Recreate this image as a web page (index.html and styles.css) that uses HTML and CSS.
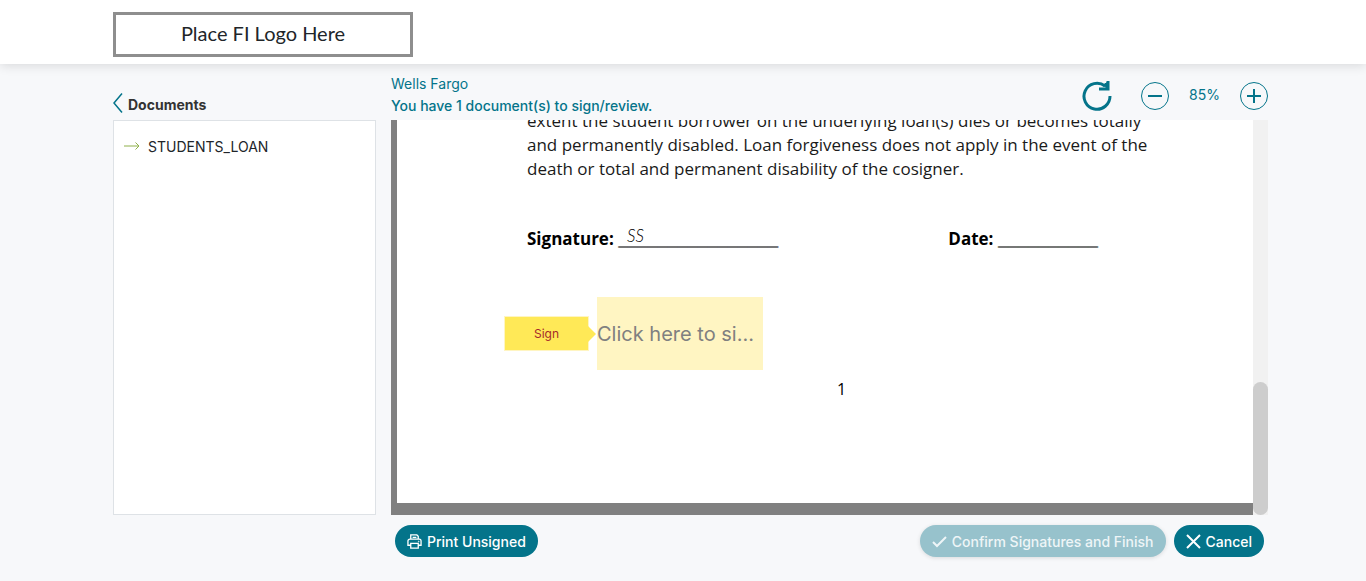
FILE: index.html
```html
<!DOCTYPE html>
<html lang="en">
<head>
    <meta charset="UTF-8">
    <meta name="viewport" content="width=device-width, initial-scale=1.0">
    <title>Sign Documents</title>
    <link rel="stylesheet" href="styles.css">
</head>
<body>
    <header class="header">
        <div class="container">
            <div class="logo">Place FI Logo Here</div>
        </div>
    </header>

    <main class="container main">
        <aside class="sidebar">
            <div class="sidebar-top">
                <button type="button" class="back-btn" aria-label="Back">
                    <svg width="10" height="20" viewBox="0 0 10 20"><path d="M9 .5L1 10l8 9.500" /></svg>
                </button>
                <h2>Documents</h2>
            </div>
            <div class="doc-list">
                <a href="#" class="doc-link">
                    <svg width="16" height="8" viewBox="0 0 16 8"><path d="M0 4h15M11.500 .5L15 4l-3.500 3.500" /></svg>
                    STUDENTS_LOAN
                </a>
            </div>
        </aside>

        <section class="content">
            <div class="toolbar">
                <div class="status">
                    <p>Wells Fargo</p>
                    <p class="status-msg">You have 1 document(s) to sign/review.</p>
                </div>
                <div class="zoom-tools">
                    <button type="button" class="icon-btn rotate-btn" aria-label="Rotate">
                        <svg width="30" height="30" viewBox="0 0 30 30"><path d="M28 15A13 13 0 1 1 23 5" stroke-width="3" /><path d="M26 0v8h-9" stroke-width="3" /><path d="M21 4l5-3v7z" fill="currentColor" /></svg>
                    </button>
                    <button type="button" class="icon-btn" aria-label="Zoom out">
                        <svg width="28" height="28" viewBox="0 0 28 28"><circle cx="14" cy="14" r="13.500" /><path d="M7 14h14" stroke-width="2" /></svg>
                    </button>
                    <span class="zoom-value">85%</span>
                    <button type="button" class="icon-btn" aria-label="Zoom in">
                        <svg width="28" height="28" viewBox="0 0 28 28"><circle cx="14" cy="14" r="13.500" /><path d="M7 14h14M14 7v14" stroke-width="2" /></svg>
                    </button>
                </div>
            </div>

            <div class="viewer">
                <div class="page">
                    <p class="page-text">extent the student borrower on the underlying loan(s) dies or becomes totally<br>and permanently disabled. Loan forgiveness does not apply in the event of the<br>death or total and permanent disability of the cosigner.</p>
                    <div class="sign-row">
                        <div class="signature">Signature: <span class="line">________________</span><span class="initials">SS</span></div>
                        <div>Date: <span class="line">__________</span></div>
                    </div>
                    <div class="sign-here">
                        <span class="sign-tag">Sign</span>
                        <button type="button" class="sign-btn">Click here to si...</button>
                    </div>
                    <div class="page-number">1</div>
                </div>
                <div class="scrollbar">
                    <div class="thumb"></div>
                </div>
            </div>

            <div class="actions">
                <button type="button" class="btn">
                    <svg width="15" height="15" viewBox="0 0 16 16"><path d="M4 5.500V1h6.500L12 2.500v3M4 12H1V7.500a2 2 0 0 1 2-2h10a2 2 0 0 1 2 2V12h-3M4 10h8v5H4zM6 3.500h4" stroke-width="1.400" /><circle cx="12.500" cy="8" r=".4" /></svg>
                    Print Unsigned
                </button>
                <div class="actions-right">
                    <button type="button" class="btn confirm-btn" disabled>
                        <svg width="15" height="15" viewBox="0 0 15 15"><path d="M1 8l4 4 9-9" stroke-width="2" /></svg>
                        Confirm Signatures and Finish
                    </button>
                    <button type="button" class="btn">
                        <svg width="15" height="15" viewBox="0 0 15 15"><path d="M1 1l13 13M14 1L1 14" stroke-width="2" /></svg>
                        Cancel
                    </button>
                </div>
            </div>
        </section>
    </main>
</body>
</html>
```
FILE: styles.css
```css
* {
    box-sizing: border-box;
}
body {
    font-family: Inter, sans-serif;
    font-size: 14px;
    margin: 0;
    background-color: #f7f8fa;
    color: #212529;
}
p, h2 {
    margin: 0;
}
button {
    font-family: inherit;
    cursor: pointer;
}
svg {
    display: block;
    fill: none;
    stroke: currentColor;
    flex-shrink: 0;
}
.container {
    max-width: 1140px;
    margin: 0 auto;
}
.header {
    background-color: #fff;
    padding: 12px 0 7px;
    box-shadow: 0 2px 10px rgba(0, 0, 0, 0.12);
}
.logo {
    width: 300px;
    height: 45px;
    border: 3px solid #8e8e8e;
    font-family: Lato, sans-serif;
    font-size: 20px;
    line-height: 36px;
    text-align: center;
}
.main {
    display: flex;
    gap: 15px;
    padding-top: 8px;
}
.sidebar {
    width: 263px;
    display: flex;
    flex-direction: column;
}
.sidebar-top {
    display: flex;
    align-items: center;
    gap: 5px;
    height: 48px;
    padding-top: 14px;
    color: #333;
}
.sidebar-top h2 {
    font-size: 14px;
    line-height: 20px;
    padding-top: 3px;
}
.back-btn {
    border: none;
    background: none;
    padding: 0;
    color: #04748a;
}
.back-btn path {
    stroke-width: 1.5;
}
.doc-list {
    height: calc(100vh - 186px);
    background-color: #fff;
    border: 1px solid #dee2e6;
    padding: 16px 10px;
}
.doc-link {
    display: flex;
    align-items: center;
    gap: 8px;
    color: #212529;
    line-height: 20px;
    text-decoration: none;
}
.doc-link svg {
    color: #8fb04a;
    margin-bottom: 2px;
}
/* the viewer's scrollbar hangs outside of the container */
.content {
    flex: 1;
    margin-right: -15px;
}
.toolbar {
    display: flex;
    justify-content: space-between;
    height: 48px;
    color: #04748a;
}
.status {
    line-height: 22px;
    padding-top: 1px;
}
.status-msg {
    font-weight: 500;
}
.zoom-tools {
    display: flex;
    align-items: center;
}
.icon-btn {
    border: none;
    background: none;
    padding: 0;
    color: #04748a;
}
.rotate-btn {
    margin-right: 29px;
}
.zoom-value {
    width: 71px;
    padding-bottom: 4px;
    text-align: center;
}
.viewer {
    display: flex;
    height: calc(100vh - 186px);
}
/* page is scrolled to its end, so the content sits at the bottom */
.page {
    flex: 1;
    display: flex;
    flex-direction: column;
    justify-content: flex-end;
    overflow: hidden;
    background-color: #fff;
    border-left: 6px solid #808080;
    border-bottom: 12px solid #808080;
    padding: 0 102px 102px 130px;
    font-family: "Open Sans", sans-serif;
    font-size: 17px;
    line-height: 24px;
    color: #000;
}
.page-text {
    white-space: nowrap;
    color: #1a1a1a;
}
.sign-row {
    display: flex;
    justify-content: space-between;
    padding: 46px 53px 46px 0;
    font-weight: bold;
}
.line {
    font-family: "Liberation Sans", sans-serif;
    font-size: 18px;
    line-height: 20px;
    text-shadow: 0 1px #000;
}
.signature {
    position: relative;
}
.initials {
    position: absolute;
    left: 100px;
    top: -3px;
    font-family: Lato, sans-serif;
    font-style: italic;
    font-weight: 300;
}
.sign-here {
    display: flex;
    align-items: center;
    gap: 8px;
    margin-left: -23px;
}
.sign-tag {
    position: relative;
    width: 85px;
    border: 1px solid #fff5c2;
    background-color: #ffe957;
    color: #a52a2a;
    font-family: Inter, sans-serif;
    font-size: 12px;
    line-height: 33px;
    text-align: center;
}
.sign-tag::after {
    content: "";
    position: absolute;
    left: 100%;
    top: 9px;
    border: 8px solid transparent;
    border-left-color: #ffe957;
    border-right: none;
}
.sign-btn {
    width: 166px;
    height: 73px;
    border: none;
    padding: 0;
    background-color: #fff5c2;
    color: #808080;
    font-family: Inter, sans-serif;
    font-size: 20px;
    text-align: left;
}
.page-number {
    padding: 7px 0 0 310px;
    font-size: 16px;
}
.scrollbar {
    width: 15px;
    display: flex;
    align-items: flex-end;
    background-color: #f1f1f1;
}
.thumb {
    width: 15px;
    height: 133px;
    border-radius: 8px;
    background-color: #cdcdcd;
}
.actions {
    display: flex;
    justify-content: space-between;
    padding: 10px 4px;
}
.actions-right {
    display: flex;
    gap: 8px;
}
.btn {
    display: flex;
    align-items: center;
    gap: 5px;
    height: 32px;
    padding: 0 12px;
    border: none;
    border-radius: 16px;
    background-color: #04748a;
    color: #fff;
    font-size: 14px;
    font-weight: 500;
}
.confirm-btn {
    background-color: #97c2cc;
    color: #eef5f7;
    box-shadow: 0 1px 4px rgba(0, 0, 0, 0.12);
    cursor: default;
}
```
